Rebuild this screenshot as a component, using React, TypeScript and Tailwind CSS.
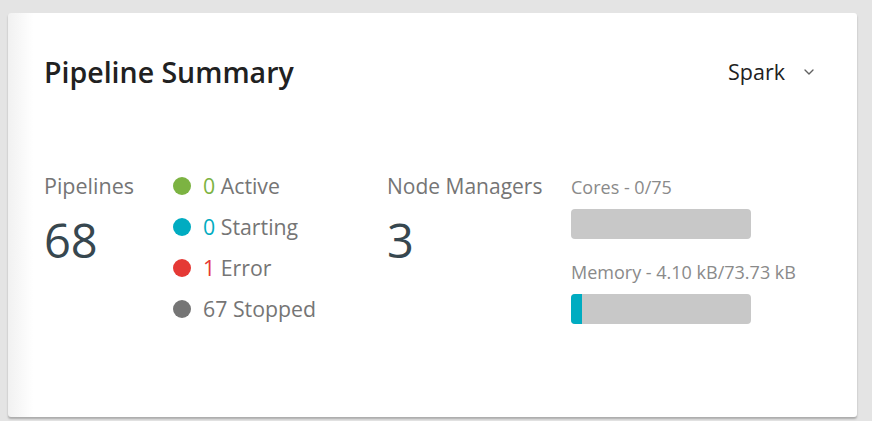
import { ChevronDown } from 'lucide-react';

type Status = { count: number; label: string; dot: string; num: string };

const statuses: Status[] = [
  { count: 0, label: 'Active', dot: 'bg-[#7cb342]', num: 'text-[#7cb342]' },
  { count: 0, label: 'Starting', dot: 'bg-[#00acc1]', num: 'text-[#00acc1]' },
  { count: 1, label: 'Error', dot: 'bg-[#e53935]', num: 'text-[#e53935]' },
  { count: 67, label: 'Stopped', dot: 'bg-[#757575]', num: 'text-[#757575]' },
];

function UsageBar({ label, percent }: { label: string; percent: number }) {
  return (
    <div className="flex flex-col gap-[12px]">
      <span className="text-[18px] leading-[20px] text-[#8a8a8a]">{label}</span>
      <div className="h-[30px] w-[180px] overflow-hidden rounded-[4px] bg-[#c8c8c8]">
        <div className="h-full bg-[#00acc1]" style={{ width: `${percent}%` }} />
      </div>
    </div>
  );
}

export default function App() {
  return (
    <div
      className="min-h-[421px] w-[872px] bg-[#e4e4e4] pl-[8px] pt-[13px]"
      style={{ fontFamily: '"Open Sans", "Noto Sans", sans-serif' }}
    >
      <div className="h-[404px] w-[849px] rounded-[3px] bg-white bg-gradient-to-r from-[#f1f1f1] via-white via-[3%] to-white pl-[36px] pr-[40px] pt-[42px] shadow-[0_2px_2px_rgba(0,0,0,0.25)]">
        <div className="flex items-center justify-between">
          <h2 className="text-[28.5px] leading-[34px] font-semibold text-[#212121]">Pipeline Summary</h2>
          <button type="button" className="flex items-center gap-[16px] text-[21.5px] leading-[24px] text-[#212121]">
            Spark
            <ChevronDown className="h-[16px] w-[16px] text-[#616161]" strokeWidth={2} />
          </button>
        </div>

        <div className="mt-[85px] flex">
          {/* Pipelines total */}
          <div className="flex w-[129px] flex-col">
            <span className="text-[21.5px] leading-[24px] text-[#757575]">Pipelines</span>
            <span className="mt-[16px] text-[47px] leading-[52px] text-[#37474f]">68</span>
          </div>

          {/* Status breakdown */}
          <ul className="flex w-[214px] flex-col gap-[17px]">
            {statuses.map((s) => (
              <li key={s.label} className="flex items-center gap-[12px] text-[21.3px] leading-[24px] text-[#757575]">
                <span className={`h-[18px] w-[18px] rounded-full ${s.dot}`} />
                <span>
                  <span className={s.num}>{s.count}</span> {s.label}
                </span>
              </li>
            ))}
          </ul>

          {/* Node managers */}
          <div className="flex w-[184px] flex-col">
            <span className="text-[21px] leading-[24px] text-[#757575]">Node Managers</span>
            <span className="mt-[16px] text-[47px] leading-[52px] text-[#37474f]">3</span>
          </div>

          {/* Resources */}
          <div className="flex flex-col gap-[23px] pt-[3px]">
            <UsageBar label="Cores - 0/75" percent={0} />
            <UsageBar label="Memory - 4.10 kB/73.73 kB" percent={6} />
          </div>
        </div>
      </div>
    </div>
  );
}
